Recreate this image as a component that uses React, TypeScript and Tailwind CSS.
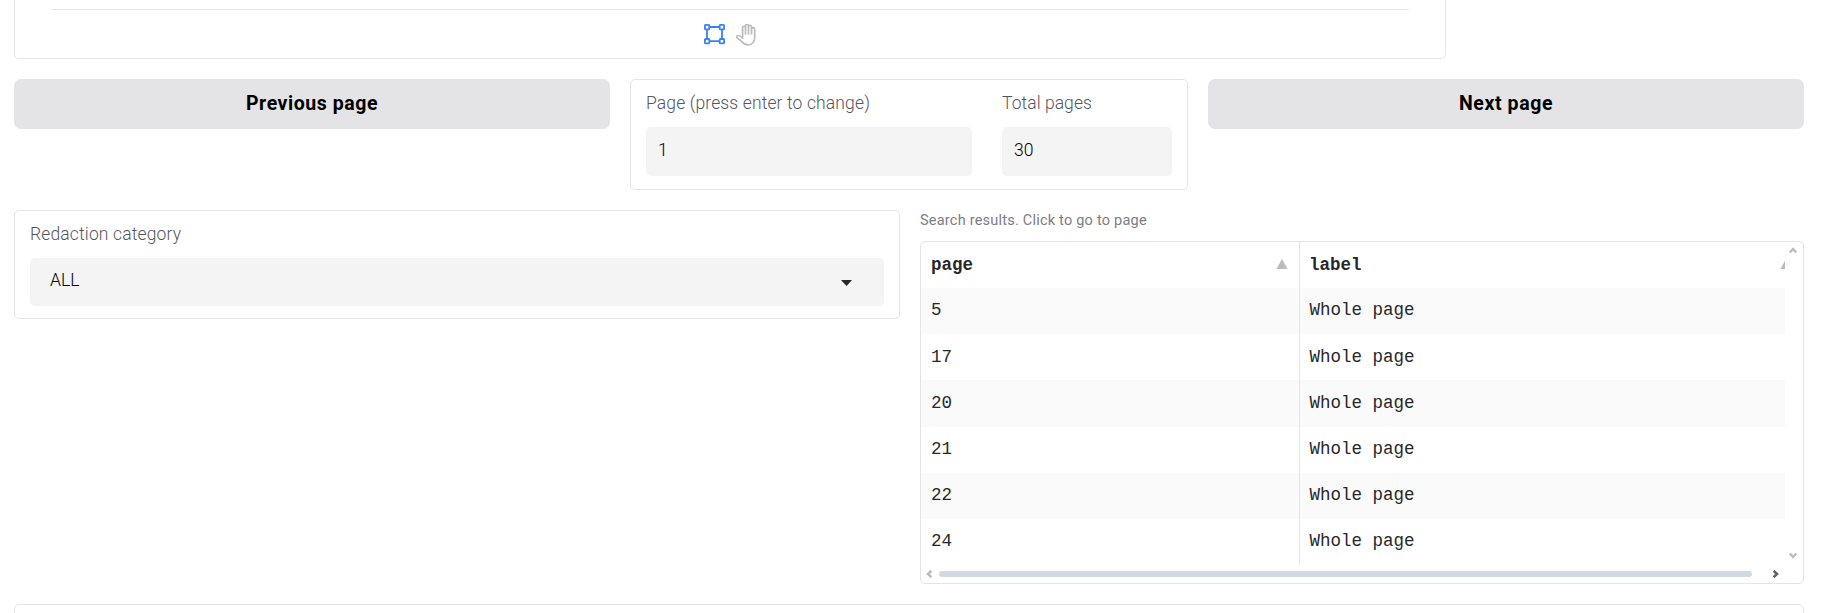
import React from "react";

const pages = ["5", "17", "20", "21", "22", "24"];

function NavButton({ children }: { children: React.ReactNode }) {
  return (
    <button className="flex h-[50px] w-[596px] justify-center rounded-[7px] bg-[#e4e4e7] pt-[12px] text-[19.5px] leading-[25px] font-bold text-black">
      {children}
    </button>
  );
}

function Field({ label, value, width }: { label: React.ReactNode; value: string; width: string }) {
  return (
    <label className={width}>
      <span className="block h-[34px] text-[17.5px] leading-[20px] font-light whitespace-nowrap text-[#55555e]">{label}</span>
      <span className="block h-[49px] rounded-[5px] bg-[#f4f4f4] px-[12px] pt-[12px] text-[17.5px] leading-[22px] font-light text-black">
        {value}
      </span>
    </label>
  );
}

function SortIcon() {
  return (
    <svg className="mt-[17px] h-[10px] w-[12px] shrink-0" viewBox="0 0 12 10">
      <path d="M6 0 11.6 10H0.4Z" fill="#bbbbc2" />
    </svg>
  );
}

function Chevron({ className, color }: { className: string; color: string }) {
  return (
    <svg className={className} width="8" height="8" viewBox="0 0 8 8" fill="none">
      <path d="M0.8 6.4 4 3 7.2 6.4" stroke={color} strokeWidth="2.5" />
    </svg>
  );
}

function BoxIcon() {
  return (
    <svg className="h-[22px] w-[22px]" viewBox="1 0 22 22" fill="none" stroke="#3b82f6" strokeWidth="1.8">
      <path d="M6.8 4H16.2M6.8 18.2H16.2M4 6.8V15.4M19 6.8V15.4" />
      <rect x="1.9" y="1.9" width="4.4" height="4.4" rx="0.6" />
      <rect x="16.7" y="1.9" width="4.4" height="4.4" rx="0.6" />
      <rect x="1.9" y="16" width="4.4" height="4.4" rx="0.6" />
      <rect x="16.7" y="16" width="4.4" height="4.4" rx="0.6" />
    </svg>
  );
}

function HandIcon() {
  return (
    <svg
      className="h-[23px] w-[21px]"
      viewBox="0 0 21 23"
      fill="none"
      stroke="#bbbbc2"
      strokeWidth="1.7"
      strokeLinecap="round"
      strokeLinejoin="round"
    >
      <path d="M6.6 14.6V4.7a1.45 1.45 0 0 1 2.9 0V3a1.5 1.5 0 0 1 3 0v.8a1.5 1.5 0 0 1 3 0v2.4a1.6 1.6 0 0 1 3.2 0V14.5c0 4.2-2.6 7.4-6.6 7.4-3 0-4.8-1.3-6.6-3.6L1 14.7c-.7-1.2.1-2.2 1.3-2.2 1.7 0 2.9 1 4.3 2.6" />
      <path d="M9.5 4.5V11M12.5 3.8V11M15.5 5.5V11" />
    </svg>
  );
}

export default function App() {
  return (
    <div className="flex h-[613px] w-[1831px] flex-col overflow-hidden bg-white pl-[14px] font-['Roboto',sans-serif]">
      <section className="h-[59px] w-[1432px] shrink-0 rounded-b-[5px] border border-t-0 border-[#e4e4e7] px-[36px] pt-[9px]">
        <div className="flex justify-center gap-[10px] border-t border-[#e4e4e7] pt-[13px]">
          <BoxIcon />
          <HandIcon />
        </div>
      </section>

      <section className="mt-[20px] flex w-[1790px] shrink-0 items-start gap-[20px]">
        <NavButton><span className="tracking-[0.55px]">Previous page</span></NavButton>
        <div className="flex h-[111px] w-[558px] gap-[30px] rounded-[5px] border border-[#e4e4e7] px-[15px] pt-[13px]">
          <Field width="w-[326px]" label={<span className="tracking-[0.13px]">Page (press enter to change)</span>} value="1" />
          <Field width="w-[170px]" label={<span className="tracking-[0.05px]">Total pages</span>} value="30" />
        </div>
        <NavButton><span className="tracking-[0.6px]">Next page</span></NavButton>
      </section>

      <section className="mt-[20px] flex w-[1790px] shrink-0 items-start gap-[20px]">
        <div className="h-[109px] w-[886px] shrink-0 rounded-[5px] border border-[#e4e4e7] px-[15px] pt-[13px]">
          <div className="h-[34px] text-[17.5px] leading-[20px] font-light text-[#55555e]">
            <span className="tracking-[0.15px]">Redaction category</span>
          </div>
          <div className="flex h-[48px] items-start justify-between rounded-[5px] bg-[#f4f4f4] pr-[32px] pl-[20px]">
            <span className="pt-[11px] text-[17.5px] leading-[22px] font-light text-black">ALL</span>
            <svg className="mt-[22px] h-[6px] w-[11px]" viewBox="0 0 11 6">
              <path d="M0 0H11L5.5 6Z" fill="#27272a" />
            </svg>
          </div>
        </div>

        <div className="w-[884px]">
          <div className="h-[31px] pt-[1px] text-[14.5px] leading-[20px] text-[#7c7c85]">
            <span className="tracking-[0.22px]">Search results. Click to go to page</span>
          </div>
          <div className="h-[343px] w-[884px] overflow-hidden rounded-[5px] border border-[#e4e4e7]">
            <div className="flex h-[323px]">
              <div className="w-[864px] overflow-hidden font-['Liberation_Mono',monospace] text-[17.5px] leading-[22px] text-[#27272a]">
                <div className="flex h-[46px] w-[871px] font-bold">
                  <div className="flex w-[379px] shrink-0 justify-between border-r border-[#e4e4e7] pr-[11px] pl-[10px]">
                    <span className="pt-[12px]">page</span>
                    <SortIcon />
                  </div>
                  <div className="flex grow justify-between pl-[9px]">
                    <span className="pt-[12px]">label</span>
                    <SortIcon />
                  </div>
                </div>
                {pages.map((page, i) => (
                  <div key={page} className={`flex h-[46.2px] ${i % 2 === 0 ? "bg-[#fafafa]" : "bg-white"}`}>
                    <div className="w-[379px] shrink-0 border-r border-[#e4e4e7] pt-[11.4px] pl-[10px]">{page}</div>
                    <div className="pt-[11.4px] pl-[9.5px]">Whole page</div>
                  </div>
                ))}
              </div>
              <div className="flex grow flex-col items-start justify-between pt-[4px] pb-[5px] pl-[4px]">
                <Chevron className="" color="#bcbcbc" />
                <Chevron className="rotate-180" color="#bcbcbc" />
              </div>
            </div>
            <div className="flex h-[17px] items-center pr-[23px] pl-[4px]">
              <Chevron className="-rotate-90" color="#bcbcbc" />
              <div className="mr-[20px] ml-[6px] h-[6px] grow rounded-full bg-[#d0dae3]" />
              <Chevron className="rotate-90" color="#606060" />
            </div>
          </div>
        </div>
      </section>

      <section className="mt-[20px] h-[60px] w-[1790px] shrink-0 rounded-[5px] border border-[#e4e4e7]" />
    </div>
  );
}
